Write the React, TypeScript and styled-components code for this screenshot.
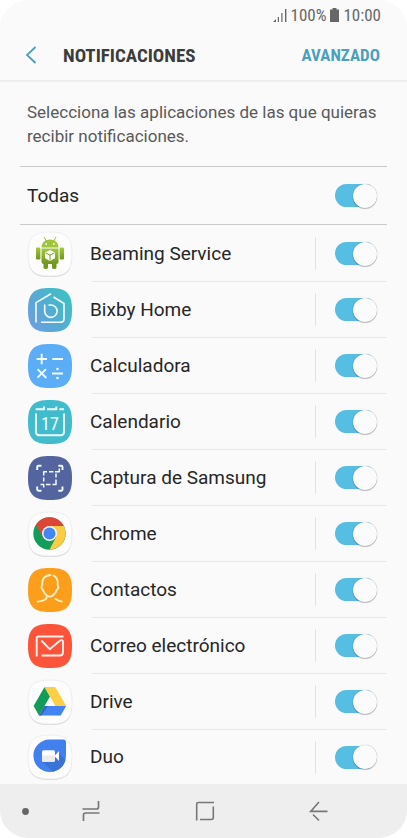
import React, { useState } from "react";
import styled, { createGlobalStyle } from "styled-components";

const GlobalStyle = createGlobalStyle`
  *, *::before, *::after { box-sizing: border-box; }
  body {
    margin: 0;
    background: #ffffff;
    font-family: Roboto, "Liberation Sans", sans-serif;
    color: #262626;
  }
  button, input { font: inherit; margin: 0; }
`;

const Screen = styled.div`
  display: flex;
  flex-direction: column;
  min-height: 100vh;
  overflow: hidden;
  border-radius: 28px;
  background: #fafafa;
`;

const StatusBar = styled.div`
  display: flex;
  align-items: center;
  justify-content: flex-end;
  gap: 4px;
  height: 30px;
  padding: 0 26px;
  font-family: "Roboto Condensed", Roboto, "Liberation Sans", sans-serif;
  font-size: 17px;
  line-height: 20px;
  color: #666666;
`;

const Header = styled.header`
  display: flex;
  align-items: center;
  height: 52px;
  padding: 0 27px 0 25px;
  border-bottom: 2px solid #eeeeee;
  font-family: "Roboto Condensed", Roboto, "Liberation Sans", sans-serif;
`;

const PlainButton = styled.button`
  display: flex;
  align-items: center;
  justify-content: center;
  padding: 0;
  border: 0;
  background: none;
  cursor: pointer;
`;

const BackButton = styled(PlainButton)`
  width: 12px;
  height: 24px;
  margin-right: 26px;
`;

const Title = styled.h1`
  flex: 1;
  margin: 0;
  font-size: 19px;
  font-weight: 700;
  color: #3c3c3c;
`;

const AdvancedButton = styled(PlainButton)`
  font-size: 17px;
  font-weight: 700;
  color: #4c9fbd;
`;

const Content = styled.main`
  flex: 1;
  padding: 0 20px;
`;

const Intro = styled.p`
  margin: 0;
  padding: 18px 7px;
  font-size: 17px;
  line-height: 24px;
  color: #595959;
  border-bottom: 1px solid #c9c9c9;
`;

const AllRow = styled.div`
  display: flex;
  align-items: center;
  height: 58px;
  padding: 0 10px 0 7px;
  border-bottom: 1px solid #c9c9c9;
`;

const AppList = styled.ul`
  margin: 0;
  padding: 1px 0 0;
  list-style: none;
`;

const AppRow = styled.li`
  display: grid;
  grid-template-columns: 72px 1fr;
  align-items: center;
`;

const IconCell = styled.div`
  display: flex;
  padding-left: 8px;
`;

const RowBody = styled.div`
  display: flex;
  align-items: center;
  height: 56px;
  padding-right: 10px;
  border-bottom: 1px solid #e8e8e8;

  ${AppRow}:last-child & {
    height: 54px;
    border-bottom: 0;
  }
`;

const Name = styled.label`
  flex: 1;
  font-size: 19px;
  line-height: 28px;
`;

const AppName = styled(Name)`
  margin-left: -2px;
`;

const Separator = styled.span`
  width: 1px;
  height: 33px;
  margin-right: 19px;
  background: #e2e2e2;
`;

const Switch = styled.input.attrs({ type: "checkbox", role: "switch" })`
  appearance: none;
  display: flex;
  align-items: center;
  flex: none;
  width: 42px;
  height: 23px;
  border-radius: 12px;
  background: linear-gradient(to right, #56bde3 36px, transparent 36px);
  cursor: pointer;

  &::before {
    content: "";
    width: 24px;
    height: 24px;
    flex: none;
    margin-left: 18px;
    border-radius: 50%;
    background: #fbfbfb;
    box-shadow: 0 0 1px 0 rgba(0, 0, 0, 0.4), 0 1px 1px rgba(0, 0, 0, 0.24);
  }

  &:not(:checked) {
    background: linear-gradient(to right, #c4c4c4 36px, transparent 36px);
  }

  &:not(:checked)::before { margin-left: 0; }
`;

const NavBar = styled.nav`
  display: grid;
  grid-template-columns: 17px 1fr 1fr 1fr;
  align-items: center;
  height: 54px;
  padding: 0 31px 0 17px;
  background: #eeeeee;
`;

const NavButton = styled(PlainButton)`
  height: 54px;
`;

const IconSvg = styled.svg`
  display: block;
  flex: none;
  overflow: visible;
`;

const SHELL =
  "M22 0C38.5 0 44 5.5 44 22S38.5 44 22 44 0 38.5 0 22 5.5 0 22 0Z";

function Tile({ fill, light, children }: { fill: string; light?: boolean; children: React.ReactNode }) {
  return (
    <IconSvg width="44" height="44" viewBox="0 0 44 44" aria-hidden="true">
      {light && <path d={SHELL} fill="#d2d2d2" transform="translate(0 1)" />}
      <path d={SHELL} fill={fill} stroke={light ? "#eeeeee" : "none"} />
      {children}
    </IconSvg>
  );
}

const line = {
  fill: "none",
  stroke: "#f4fbff",
  strokeWidth: 1.9,
  strokeLinejoin: "round" as const,
};

const Beaming = () => (
  <Tile fill="#fdfdfd" light>
    <defs>
      <linearGradient id="droid" x1="0" y1="0" x2="0" y2="1">
        <stop offset="0" stopColor="#a4c93c" />
        <stop offset="1" stopColor="#6f951f" />
      </linearGradient>
    </defs>
    <path d="M16.3 5.5 18.2 9M27.8 5.5 25.9 9" stroke="#9cc236" strokeWidth="1" strokeLinecap="round" />
    <path d="M13.5 15.5C13.7 10.8 17 7.6 22 7.6S30.3 10.8 30.5 15.5Z" fill="#9fc63a" />
    <circle cx="18.2" cy="12" r="0.9" fill="#fff" />
    <circle cx="25.8" cy="12" r="0.9" fill="#fff" />
    <path d="M15.5 29H20V35.5Q20 37 17.8 37T15.5 35.5ZM24 29H28.5V35.5Q28.5 37 26.3 37T24 35.5Z" fill="#71971f" />
    <rect x="8" y="15.5" width="4.4" height="12" rx="1.2" fill="url(#droid)" />
    <rect x="31.6" y="15.5" width="4.4" height="12" rx="1.2" fill="url(#droid)" />
    <path d="M13.5 16.5H30.5V29.5Q30.5 32 28 32H16Q13.5 32 13.5 29.5Z" fill="url(#droid)" />
    <path d="M22 18 27 20.5V26.3L22 29 17 26.3V20.5Z" fill="#fafcf4" />
    <path d="M17.6 20.9 22 23.2 26.4 20.9M22 23.2V28.3" fill="none" stroke="#7d9c3b" strokeWidth="1" />
  </Tile>
);

const Bixby = () => (
  <Tile fill="url(#bixby)">
    <defs>
      <linearGradient id="bixby" x1="0" y1="1" x2="1" y2="0.3">
        <stop offset="0" stopColor="#719be6" />
        <stop offset="0.45" stopColor="#59a9d5" />
        <stop offset="1" stopColor="#3fbfc4" />
      </linearGradient>
    </defs>
    <path {...line} strokeWidth="1.6" d="M23 5.7 8 14.6V34.5M25.5 9 36 15.5V31Q36 34.2 32.8 34.2H13" />
    <path {...line} strokeWidth="1.6" d="M16.7 16.5V23.3A6.2 6.2 0 1 0 22.9 17H20.5" />
  </Tile>
);

const Calculator = () => (
  <Tile fill="#5badf5">
    <path {...line} d="M8.5 15H19M13.7 9.8V20.2M24.3 15H35M9.5 25.2 18.3 34M18 25.2 9.5 33.7M24 29.5H35" />
    <circle cx="29.5" cy="25" r="1.3" fill="#f4fbff" />
    <circle cx="29.5" cy="34" r="1.3" fill="#f4fbff" />
  </Tile>
);

const CalendarDay = styled.text`
  font-family: "Roboto Condensed", Roboto, sans-serif;
  font-size: 18px;
  fill: #f4fbff;
`;

const Calendar = () => (
  <Tile fill="#41bccd">
    <path {...line} strokeLinejoin="miter" d="M7.7 9.3H16V6.5M19 9.3H28.3V6.5M31.3 9.3H36M8 13.5V32Q8 35.2 11.2 35.2H32.8Q36 35.2 36 32V13.5" />
    <CalendarDay x="22" y="29.500" textAnchor="middle">17</CalendarDay>
  </Tile>
);

const Capture = () => (
  <Tile fill="#53649f">
    <path {...line} d="M9.2 14V11Q9.2 9.8 10.4 9.8H13.5M30.3 9.8H33.300Q34.500 9.800 34.500 11V14M9.200 30.500V33.500Q9.200 34.700 10.400 34.700H13.500M30.300 34.700H33.300Q34.500 34.700 34.500 33.500V30.500" />
    <path {...line} strokeWidth="1.500" d="M15.700 19.500V15.700H19M21 15.700H25.500M27 15.700H31.300V12.500M28 17.500V21.500M28 23.500V28.500H24.500M22.500 28.500H18M15.700 21.500V25.500M15.700 31.500V28.500H12.500" />
  </Tile>
);

const Chrome = () => (
  <Tile fill="#fdfdfd" light>
    <circle cx="21.500" cy="21.500" r="16.200" fill="#139d5b" />
    <path d="M21.500 21.500 28 25.300 21.500 37.700A16.200 16.200 0 0 0 35.800 14H21.500Z" fill="#fccd44" />
    <path d="M7.900 12.700A16.200 16.200 0 0 1 35.850 14H21.500L15 25.250Z" fill="#dc4637" />
    <circle cx="21.500" cy="21.500" r="7.500" fill="#f5f5f5" />
    <circle cx="21.500" cy="21.500" r="6" fill="#4385f5" />
  </Tile>
);

const Contacts = () => (
  <Tile fill="#fb9e1c">
    <path {...line} stroke="#fff1c8" strokeWidth="1.800" strokeLinecap="round" d="M22.500 7C17 7.300 13.700 10.500 14.300 16.500L13.400 19Q13.300 20.700 14.700 21.500C15.300 24.200 17 26.200 19 27.700Q21.500 29.500 24.500 27.700C27 26 28.400 24 29 21.500Q30.500 20.700 30.400 19L29.600 16.500C30.200 12 28.500 9 25.500 7.700M19 27.700C19.300 31.500 14 33.500 9.500 33.600M27.500 31C29.500 32.500 31.500 33.300 34 33.600" />
  </Tile>
);

const Mail = () => (
  <Tile fill="#fb543b">
    <path {...line} stroke="#fff0e9" d="M8.700 32.500V14.200Q8.700 12.500 10.400 12.500H35.500M13.300 16.500 21.700 25.200 31.500 17Q35 14.600 35 18V28.200Q35 31.500 31.700 31.500H13.500" />
  </Tile>
);

const Drive = () => (
  <Tile fill="#fdfdfd" light>
    <path d="M16.500 7 5.600 26 11 35.500 22 16.500Z" fill="#119c58" />
    <path d="M16.500 7H27.200L38.200 26H27.400Z" fill="#fece47" />
    <path d="M16.400 26H38.200L32.700 35.500H11Z" fill="#4284f2" />
    <path d="M16.400 26H20L13.500 35.500H11Z" fill="#3468c4" />
  </Tile>
);

const Duo = () => (
  <Tile fill="#fdfdfd" light>
    <path d="M21.700 4.500H35.500Q38 4.500 38 7V20.800A16.300 16.300 0 1 1 21.700 4.500Z" fill="#4280ee" />
    <path d="M14 26.500 25 36.700A16.300 16.300 0 0 0 37.500 25L31 18.500 26 26Z" fill="#3a72d6" />
    <rect x="14" y="15.300" width="13" height="11.500" rx="1.600" fill="#ffffff" />
    <path d="M14 20.500H27V25.200Q27 26.800 25.400 26.800H15.600Q14 26.800 14 25.200Z" fill="#ececec" />
    <path d="M26.500 21 31 16V26Z" fill="#ffffff" />
  </Tile>
);

const apps = [
  { id: "beaming", name: "Beaming Service", Icon: Beaming },
  { id: "bixby-home", name: "Bixby Home", Icon: Bixby },
  { id: "calculadora", name: "Calculadora", Icon: Calculator },
  { id: "calendario", name: "Calendario", Icon: Calendar },
  { id: "captura", name: "Captura de Samsung", Icon: Capture },
  { id: "chrome", name: "Chrome", Icon: Chrome },
  { id: "contactos", name: "Contactos", Icon: Contacts },
  { id: "correo", name: "Correo electrónico", Icon: Mail },
  { id: "drive", name: "Drive", Icon: Drive },
  { id: "duo", name: "Duo", Icon: Duo },
];

export default function App() {
  const [off, setOff] = useState<string[]>([]);

  const toggle = (id: string) =>
    setOff((prev) => (prev.includes(id) ? prev.filter((x) => x !== id) : [...prev, id]));
  const toggleAll = () => setOff(off.length === 0 ? apps.map((a) => a.id) : []);

  return (
    <>
      <GlobalStyle />
      <Screen>
        <StatusBar>
          <IconSvg width="14" height="14" viewBox="0 0 14 14" aria-hidden="true">
            <path d="M0 14 3 11V14ZM4.800 9H6V14H4.800ZM8.300 5H9.500V14H8.300ZM12 1H13.400V14H12Z" fill="#666666" />
          </IconSvg>
          <span>100%</span>
          <IconSvg width="9" height="14" viewBox="0 0 9 14" aria-hidden="true">
            <path d="M2.500 0H6.500V1.500H9V14H0V1.500H2.500Z" fill="#666666" />
          </IconSvg>
          <span>10:00</span>
        </StatusBar>
        <Header>
          <BackButton aria-label="Atrás">
            <IconSvg width="12" height="18" viewBox="0 0 12 18" aria-hidden="true">
              <path d="M10.500 1 2 9 10.500 17" fill="none" stroke="#4c9fbd" strokeWidth="1.800" />
            </IconSvg>
          </BackButton>
          <Title>NOTIFICACIONES</Title>
          <AdvancedButton>AVANZADO</AdvancedButton>
        </Header>
        <Content>
          <Intro>Selecciona las aplicaciones de las que quieras recibir notificaciones.</Intro>
          <AllRow>
            <Name htmlFor="todas">Todas</Name>
            <Switch id="todas" checked={off.length === 0} onChange={toggleAll} />
          </AllRow>
          <AppList>
            {apps.map(({ id, name, Icon }) => (
              <AppRow key={id}>
                <IconCell>
                  <Icon />
                </IconCell>
                <RowBody>
                  <AppName htmlFor={id}>{name}</AppName>
                  <Separator />
                  <Switch id={id} checked={!off.includes(id)} onChange={() => toggle(id)} />
                </RowBody>
              </AppRow>
            ))}
          </AppList>
        </Content>
        <NavBar>
          <NavButton aria-label="Ocultar barra">
            <IconSvg width="7" height="7" viewBox="0 0 7 7" aria-hidden="true">
              <circle cx="3.500" cy="3.500" r="3.400" fill="#666666" />
            </IconSvg>
          </NavButton>
          <NavButton aria-label="Recientes">
            <IconSvg width="20" height="22" viewBox="0 0 20 22" aria-hidden="true">
              <path d="M17.500 1V7Q17.500 9 15.500 9H1.500M18.500 13H4.500Q2.500 13 2.500 15V21" fill="none" stroke="#777777" strokeWidth="1.700" />
            </IconSvg>
          </NavButton>
          <NavButton aria-label="Inicio">
            <IconSvg width="20" height="20" viewBox="0 0 20 20" aria-hidden="true">
              <path d="M1.700 19.500V3Q1.700 1.500 3.200 1.500H19M18.300 5.500V16.500Q18.300 18.500 16.300 18.500H5" fill="none" stroke="#777777" strokeWidth="1.600" />
            </IconSvg>
          </NavButton>
          <NavButton aria-label="Volver">
            <IconSvg width="20" height="20" viewBox="0 0 20 20" aria-hidden="true">
              <path d="M10 1 1.700 10.400H18.500M4 13.500 10 19.500" fill="none" stroke="#777777" strokeWidth="1.600" />
            </IconSvg>
          </NavButton>
        </NavBar>
      </Screen>
    </>
  );
}
